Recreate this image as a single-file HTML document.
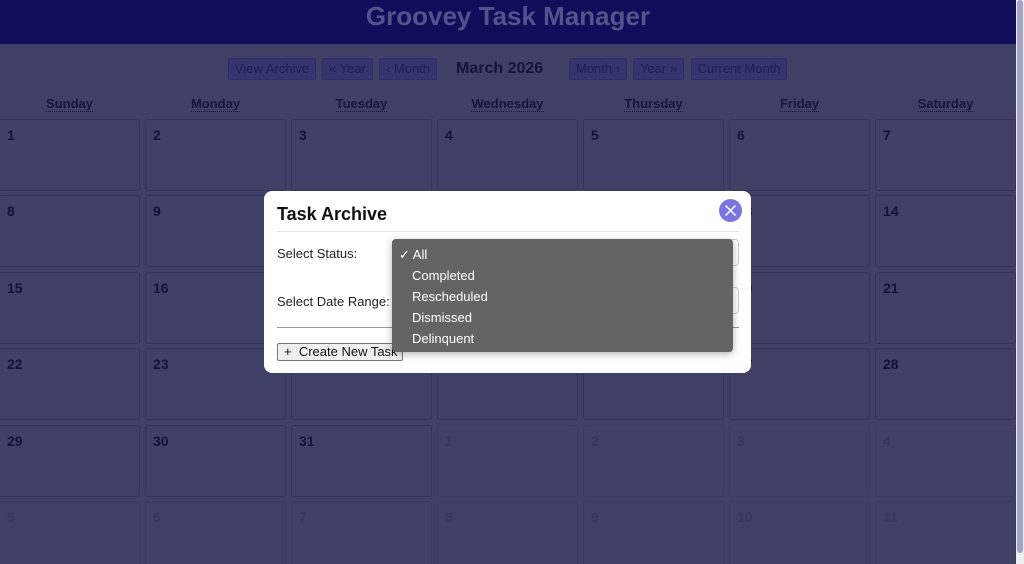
<!DOCTYPE html>
<html style="height:564px;overflow:hidden"><head><meta charset="utf-8"><style>
*{box-sizing:border-box;margin:0;padding:0}
body{width:1024px;height:564px;overflow:hidden;background:#403f66;font-family:"Liberation Sans",sans-serif;position:relative}
.hdr{position:absolute;left:0;top:0;width:1016px;height:44px;background:#120d5a;text-align:center;color:#54528a;font-weight:bold;font-size:26px;line-height:32px}
.btn{position:absolute;top:58px;height:22px;background:#36346e;border:1px solid #2f2d66;border-radius:2px;color:#1e1c52;font-size:13px;line-height:20px;text-align:center}
.title{position:absolute;left:456px;top:58px;font-weight:bold;font-size:16px;color:#15133c;line-height:22px}
.day{position:absolute;top:96px;width:141px;text-align:center;font-weight:bold;font-size:13px;color:#17153f}
.day span{border-bottom:1px dotted #17153f}
.cell{position:absolute;width:141px;height:72px;border:1px solid #36345a;border-radius:3px}
.cell b{position:absolute;left:7px;top:7px;font-size:14px;color:#14123a}
.cell.f{border-color:#3b3a60}
.cell.f b{color:#37365e}
.sb{position:absolute;left:1016px;top:0;width:8px;height:564px;background:#eee}
.sb div{position:absolute;left:1px;top:0;width:6px;height:553px;background:#a3a3c8;border-radius:3px}
.modal{position:absolute;left:264px;top:191px;width:487px;height:182px;background:#fff;border-radius:8px}
.modal h2{position:absolute;left:13px;top:13px;font-size:18px;color:#111;font-weight:bold}
.close{position:absolute;left:455px;top:8px;width:23px;height:23px;border-radius:50%;background:#7b74e0}
.hr{position:absolute;left:13px;width:462px;height:1px}
.lbl{position:absolute;left:13px;font-size:13px;color:#222}
.sel{position:absolute;left:128px;width:347px;height:27px;border:1px solid #ccc;border-radius:4px}
.create{position:absolute;left:13px;top:152px;width:126px;height:18px;border:1px solid #777;border-radius:2px;background:#f0f0f0;font-size:13px;line-height:16px;padding-left:6px;color:#111;white-space:pre}
.dd{position:absolute;left:392px;top:239px;width:341px;height:113px;background:#646464;border-radius:4px;box-shadow:0 2px 8px rgba(0,0,0,.3);color:#fff;font-size:13px}
.dd div{position:absolute;left:20px}
</style></head><body>
<div class="hdr">Groovey Task Manager</div>
<div class="btn" style="left:228px;width:88px">View Archive</div>
<div class="btn" style="left:322px;width:51px">« Year</div>
<div class="btn" style="left:379px;width:58px">‹ Month</div>
<div class="title">March 2026</div>
<div class="btn" style="left:569px;width:58px">Month ›</div>
<div class="btn" style="left:633px;width:51px">Year »</div>
<div class="btn" style="left:691px;width:96px">Current Month</div>
<div class="day" style="left:-1px"><span>Sunday</span></div>
<div class="day" style="left:145px"><span>Monday</span></div>
<div class="day" style="left:291px"><span>Tuesday</span></div>
<div class="day" style="left:437px"><span>Wednesday</span></div>
<div class="day" style="left:583px"><span>Thursday</span></div>
<div class="day" style="left:729px"><span>Friday</span></div>
<div class="day" style="left:875px"><span>Saturday</span></div>
<div id="g"></div>
<div class="sb"><div></div></div>
<div class="modal">
<h2>Task Archive</h2>
<div class="close"><svg width="23" height="23"><path d="M6.5 6.5L16.5 16.5M16.5 6.5L6.5 16.5" stroke="#fff" stroke-width="1.5"/></svg></div>
<div class="hr" style="top:40px;background:#e6e6e6"></div>
<div class="lbl" style="top:55px">Select Status:</div>
<div class="sel" style="top:48px"></div>
<div class="lbl" style="top:103px">Select Date Range:</div>
<div class="sel" style="top:96px"></div>
<div class="hr" style="top:136px;background:#999"></div>
<div class="create">+  Create New Task</div>
</div>
<div class="dd">
<div style="left:7px;top:8px">✓ All</div>
<div style="top:29px">Completed</div>
<div style="top:50px">Rescheduled</div>
<div style="top:71px">Dismissed</div>
<div style="top:92px">Delinquent</div>
</div>
<script>
var h='',tops=[119,195,272,348,425,501],n=1;
for(var r=0;r<6;r++)for(var c=0;c<7;c++){var f=false,v;
if(n<=31){v=n;}else{f=true;v=n-31;}
h+='<div class="cell'+(f?' f':'')+'" style="left:'+(-1+146*c)+'px;top:'+tops[r]+'px"><b>'+v+'</b></div>';n++;}
document.getElementById('g').innerHTML=h;
</script>
</body></html>
